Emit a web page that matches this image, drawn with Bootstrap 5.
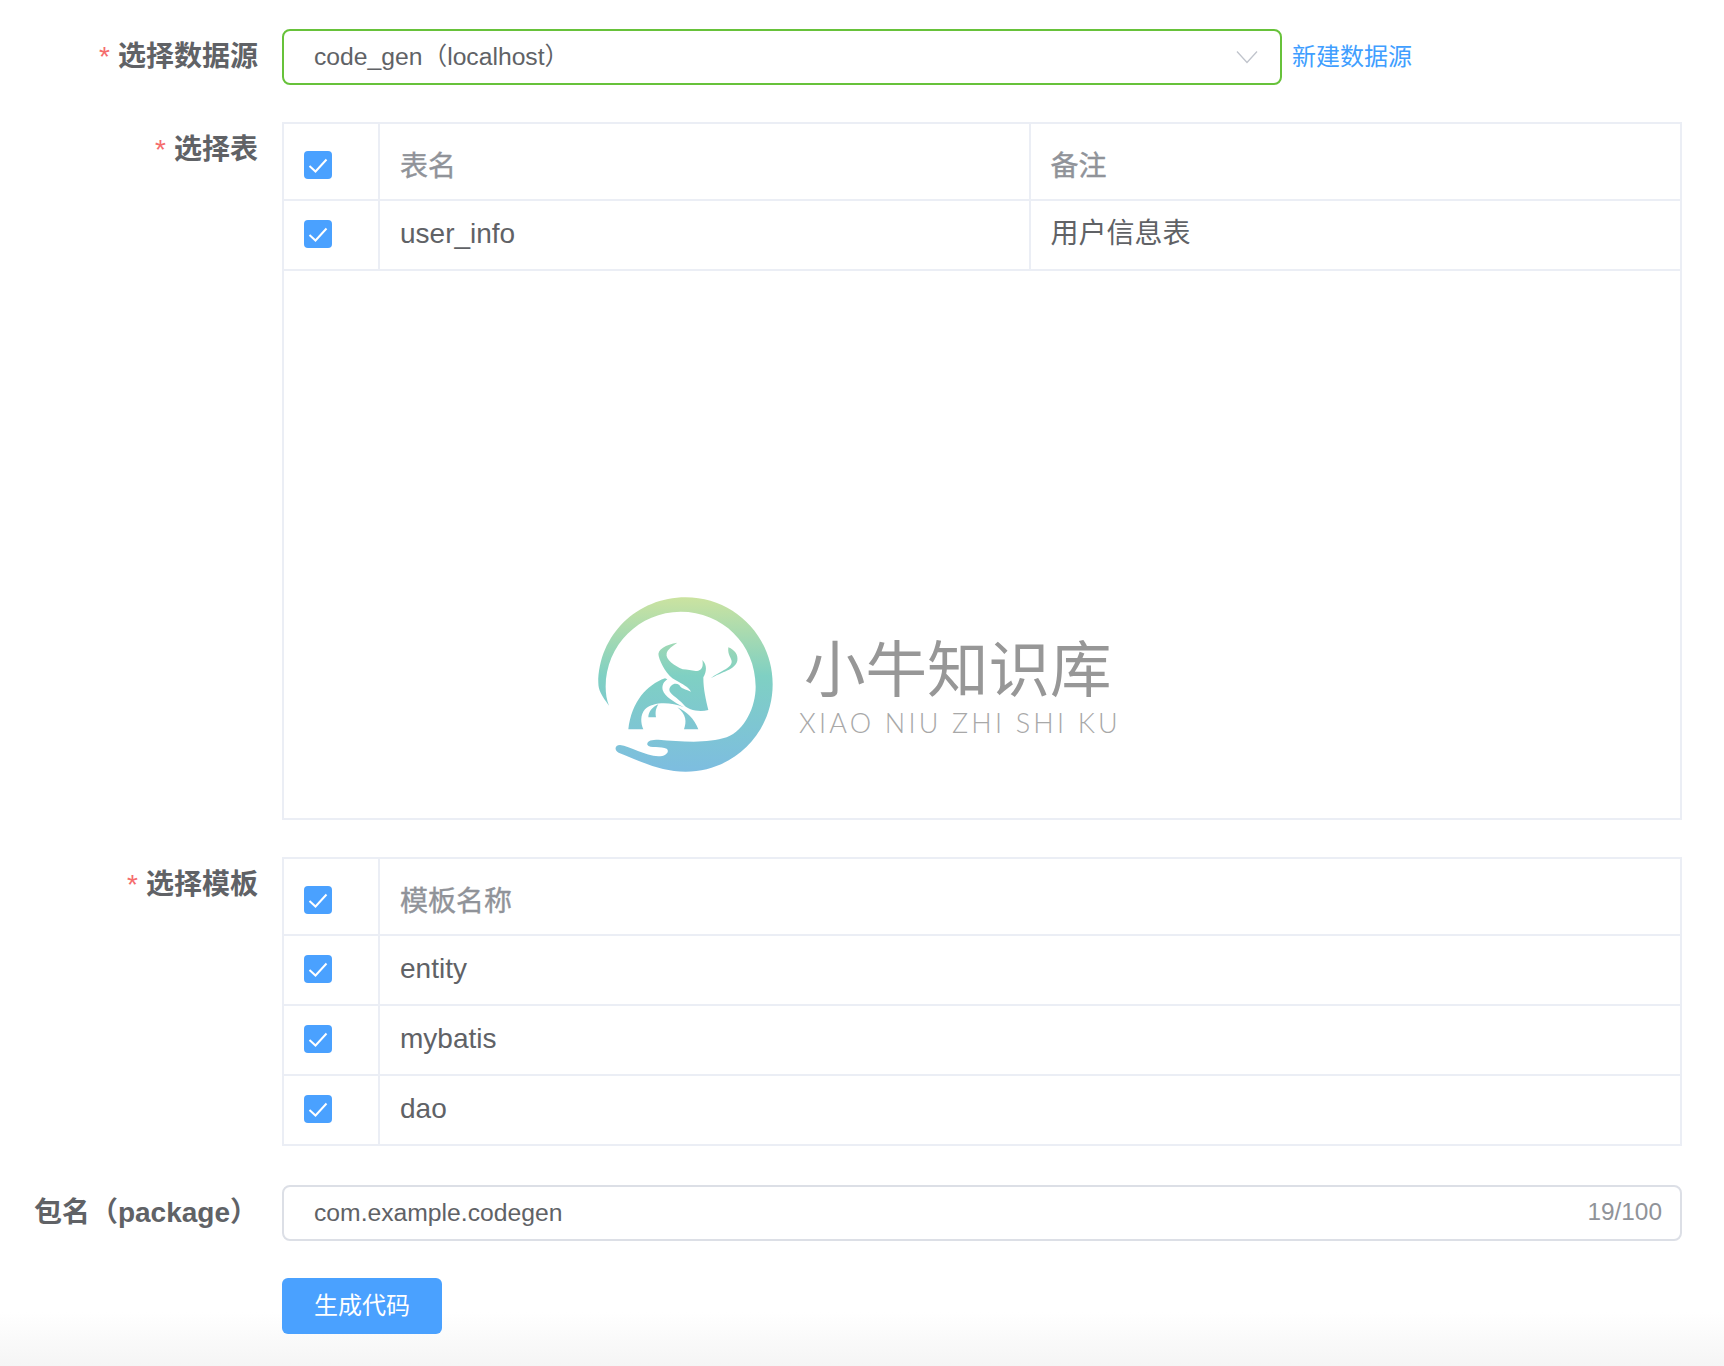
<!DOCTYPE html>
<html lang="zh-CN">
<head>
  <meta charset="UTF-8">
  <title>代码生成</title>
  <link href="https://cdn.jsdelivr.net/npm/bootstrap@5.3.3/dist/css/bootstrap.min.css" rel="stylesheet">
  <style>
    html, body { height: 1366px; overflow: hidden; }
    body {
      font-family: "Liberation Sans", "Noto Sans CJK SC", sans-serif;
      color: #606266;
      background: linear-gradient(to bottom, #fff 1312px, #f5f5f5 1366px);
    }
    .gen-form { padding: 29px 42px 0 0; }
    .gen-row { display: flex; margin-bottom: 37px; }
    .gen-row-tall { margin-bottom: 39px; }
    .gen-label {
      flex: 0 0 258px; margin-right: 24px; text-align: right;
      font-size: 28px; font-weight: 700; line-height: 56px; color: #606266; white-space: nowrap;
    }
    .gen-star { color: #f56c6c; margin-right: 8px; font-weight: 400; }
    .gen-body { flex: 1 1 auto; min-width: 0; position: relative; }
    .gen-select.form-select {
      width: 1000px; height: 56px; padding: 0 60px 0 30px; font-size: 24.7px; color: #606266;
      border: 2px solid #67c23a; border-radius: 8px; box-shadow: none;
      background-size: 22px 14px; background-position: right 22px center;
      background-image: url("data:image/svg+xml,%3Csvg xmlns='http://www.w3.org/2000/svg' viewBox='0 0 22 14'%3E%3Cpath d='M1 1.5 11 12.5 21 1.5' fill='none' stroke='%23c0c4cc' stroke-width='1.3'/%3E%3C/svg%3E");
    }
    .gen-link { font-size: 24px; color: #409eff; text-decoration: none; margin-left: 10px; }
    .gen-box { border: 2px solid #ebeef5; border-bottom: 0; }
    .gen-box .table { margin: 0; --bs-table-border-color: #ebeef5; border-color: #ebeef5; font-size: 28px; color: #606266; table-layout: fixed; }
    .gen-box .table > * > * > * {
      border-width: 0 2px 2px 0; padding: 0 20px; vertical-align: middle; color: #606266; font-weight: 400; line-height: 34px;
    }
    .gen-box .table > * > * > *:last-child { border-right: 0; }
    .gen-box .table th { color: #909399; font-weight: 400; -webkit-text-stroke: .4px #909399; padding-top: 10px; height: 76px; }
    .gen-box .table th:first-child { padding-top: 6px; }
    .gen-box .table td { height: 70px; padding-bottom: 2px; }
    .gen-check-col { width: 95px; }
    .gen-check.form-check-input {
      display: block; width: 28px; height: 28px; margin: 0; border: 0; border-radius: 4px;
      background-color: #4aa1ff; background-size: 28px 28px; box-shadow: none;
    }
    .gen-check.form-check-input:checked[type=checkbox] {
      --bs-form-check-bg-image: url("data:image/svg+xml,%3Csvg xmlns='http://www.w3.org/2000/svg' viewBox='0 0 28 28'%3E%3Cpath d='M5.5 15 11.5 20.5 22.5 8.5' fill='none' stroke='%23fff' stroke-width='2'/%3E%3C/svg%3E");
    }
    .gen-empty { height: 549px; border-bottom: 2px solid #ebeef5; display: flex; padding: 319px 0 0 306px; }
    .gen-logo-svg { flex: 0 0 190px; width: 190px; height: 190px; }
    .gen-logo-text { margin: 43px 0 0 22px; color: #999; }
    .gen-logo-cn { font-size: 61.5px; line-height: 66px; font-family: "Noto Sans CJK SC", sans-serif; font-weight: 400; white-space: nowrap; padding-left: 2px; color: #979797; }
    .gen-logo-en { font-family: Lato, sans-serif; font-weight: 300; font-size: 27px; line-height: 30px; letter-spacing: 3.2px; white-space: nowrap; margin: 9px 0 0 -3px; color: #a8a8a8; }
    .gen-input.form-control {
      height: 56px; padding: 0 110px 0 30px; font-size: 24.7px; color: #606266;
      border: 2px solid #dcdfe6; border-radius: 8px; box-shadow: none;
    }
    .gen-count { position: absolute; right: 20px; top: 0; line-height: 54px; font-size: 24.4px; color: #909399; }
    .gen-btn.btn {
      width: 160px; height: 56px; padding: 0; font-size: 24px; color: #fff; border: 0; border-radius: 6px;
      background-color: #4aa1ff;
    }
  </style>
</head>
<body>

<form class="gen-form">
  <div class="gen-row">
    <label class="gen-label"><span class="gen-star">*</span>选择数据源</label>
    <div class="gen-body d-flex align-items-center">
      <select class="form-select gen-select">
        <option>code_gen（localhost）</option>
      </select>
      <a href="#" class="gen-link">新建数据源</a>
    </div>
  </div>

  <div class="gen-row">
    <label class="gen-label"><span class="gen-star">*</span>选择表</label>
    <div class="gen-body gen-box">
      <table class="table">
        <colgroup><col class="gen-check-col"><col><col></colgroup>
        <thead>
          <tr>
            <th><input class="form-check-input gen-check" type="checkbox" checked></th>
            <th>表名</th>
            <th>备注</th>
          </tr>
        </thead>
        <tbody>
          <tr>
            <td><input class="form-check-input gen-check" type="checkbox" checked></td>
            <td>user_info</td>
            <td>用户信息表</td>
          </tr>
        </tbody>
      </table>
      <div class="gen-empty">
        <svg class="gen-logo-svg" viewBox="0 0 570 570">
          <defs>
            <linearGradient id="logoGrad" gradientUnits="userSpaceOnUse" x1="0" y1="22" x2="0" y2="545">
              <stop offset="0" stop-color="#cbe3a0"/>
              <stop offset="0.45" stop-color="#7fd0c3"/>
              <stop offset="1" stop-color="#7dbde0"/>
            </linearGradient>
          </defs>
          <g fill="url(#logoGrad)">
            <path d="M57 347C35 318 25 300 25 280C25 135 142 22 287 22C432 22 548 138 548 283C548 428 432 545 287 545C215 545 160 518 86 488C72 480 74 466 90 465C120 468 165 498 205 499C228 499 240 484 230 476C215 468 178 476 172 464C170 452 185 449 205 449C270 454 350 462 410 442C465 420 497 350 497 290C497 161 396 65 272 65C148 65 47 166 47 290C47 310 50 330 57 347Z"/>
            <path d="M262 158C228 164 200 178 206 198C212 222 232 258 256 270C278 282 296 292 303 305C285 296 275 298 268 285C255 275 240 285 238 298C236 312 262 322 282 345C292 358 325 368 355 360C348 330 340 300 340 262C350 245 352 225 337 210C340 225 338 238 325 242C310 245 295 238 278 238C255 228 225 210 230 190C232 178 248 168 262 158Z"/>
            <path d="M225 265C170 285 125 335 115 418L160 418C152 400 150 375 165 358C190 335 240 335 282 352C250 335 225 320 218 300C215 285 222 275 232 268Z"/>
            <path d="M262 352C290 365 312 385 325 418L282 418C290 395 290 375 262 352Z"/>
            <path d="M205 343C188 350 175 365 175 382L198 382C195 365 198 355 205 343Z"/>
            <path d="M415 172C435 180 445 195 442 212C435 240 395 245 362 265C385 245 425 235 425 215C425 205 412 195 415 172Z"/>
          </g>
        </svg>
        <div class="gen-logo-text">
          <div class="gen-logo-cn">小牛知识库</div>
          <div class="gen-logo-en">XIAO NIU ZHI SHI KU</div>
        </div>
      </div>
    </div>
  </div>

  <div class="gen-row gen-row-tall">
    <label class="gen-label"><span class="gen-star">*</span>选择模板</label>
    <div class="gen-body gen-box">
      <table class="table">
        <colgroup><col class="gen-check-col"><col></colgroup>
        <thead>
          <tr>
            <th><input class="form-check-input gen-check" type="checkbox" checked></th>
            <th>模板名称</th>
          </tr>
        </thead>
        <tbody>
          <tr>
            <td><input class="form-check-input gen-check" type="checkbox" checked></td>
            <td>entity</td>
          </tr>
          <tr>
            <td><input class="form-check-input gen-check" type="checkbox" checked></td>
            <td>mybatis</td>
          </tr>
          <tr>
            <td><input class="form-check-input gen-check" type="checkbox" checked></td>
            <td>dao</td>
          </tr>
        </tbody>
      </table>
    </div>
  </div>

  <div class="gen-row">
    <label class="gen-label">包名（package）</label>
    <div class="gen-body">
      <input type="text" class="form-control gen-input" value="com.example.codegen">
      <span class="gen-count">19/100</span>
    </div>
  </div>

  <div class="gen-row">
    <div class="gen-label"></div>
    <div class="gen-body">
      <button type="button" class="btn gen-btn">生成代码</button>
    </div>
  </div>
</form>

<script src="https://cdn.jsdelivr.net/npm/bootstrap@5.3.3/dist/js/bootstrap.bundle.min.js"></script>
</body>
</html>
